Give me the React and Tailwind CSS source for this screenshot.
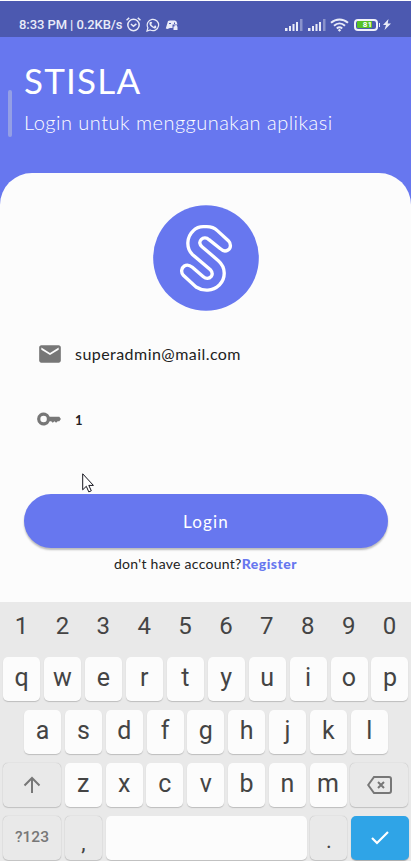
import React from 'react';

const LETTER = 'flex h-11 w-[37px] shrink-0 items-center justify-center rounded-[5px] bg-[#fcfcfc] pb-1 text-[25px] leading-none text-[#444] shadow-[0_1px_1px_#bdbdbd]';
const MUTED = 'flex h-11 shrink-0 items-center justify-center rounded-[5px] bg-[#e9e9e9] shadow-[0_0_1px_#aaa,0_1px_1px_#c4c4c4]';

function Letters({ keys }) {
  return keys.split('').map((k) => <div key={k} className={LETTER}>{k}</div>);
}

function Signal() {
  return (
    <svg className="h-3 w-[19px]" viewBox="0 0 19 12" fill="#e9ebf8">
      <path d="M1 9h2.5v3H1zM5 7h2v5H5zM8.500 5h2v7h-2zM12 3h2v9h-2z" />
      <path d="M16 0h2.500v12H16z" opacity=".4" />
    </svg>
  );
}

function StatusBar() {
  return (
    <div className="flex h-[37px] items-center border-t border-white bg-[#4c59b0] pt-[11px] text-[#e9ebf8]">
      <span className="ml-[19px] w-[107px] whitespace-nowrap font-['Roboto'] text-[13px] font-medium leading-none tracking-[-0.08px]">8:33 PM | 0.2KB/s</span>
      <svg className="h-[15px] w-[15px]" viewBox="0 0 14 14" fill="none" stroke="currentColor" strokeWidth="1.4">
        <circle cx="7" cy="7.500" r="5.300" />
        <path d="M.5 3 3 .8M11 .8 13.500 3M4.600 6.500 7 8.600l2.700-2.100" />
      </svg>
      <svg className="ml-[5px] h-[14px] w-[14px]" viewBox="0 0 14 14" fill="none" stroke="currentColor" strokeWidth="1.200">
        <path d="M1 13l.9-3.300A5.700 5.700 0 1 1 4.200 12Z" />
        <path d="M4.700 4.200c-1 1.200 0 3 1.500 4.300 1.400 1.200 2.900 1.600 3.700.5M4.700 4.200l1 1.300M9.900 9 8.500 8" strokeWidth="1.600" />
      </svg>
      <svg className="ml-[5px] h-3 w-[14px]" viewBox="0 0 14 12" fill="currentColor">
        <path d="M3 2 5 1.500h5l1.500 1 1 3H7.500V9H5L2.500 10 .8 9.600Z" />
        <path d="M8.500 7.500h4V11h-4zM9.500 8V6.300h2.500V8" />
        <path d="M4 4.500h2M9.500 3.500v1.500" stroke="#4c59b0" />
      </svg>
      <div className="ml-[105px] flex items-center">
        <Signal />
        <div className="w-[4px]" />
        <Signal />
        <svg className="ml-[4px] h-[14px] w-[19px]" viewBox="0 0 19 14" fill="none" stroke="currentColor" strokeWidth="2">
          <path d="M1 4.800c5-4.500 12-4.500 17 0M4 7.800c3.300-3 7.700-3 11 0M6.800 10.500c1.600-1.400 3.800-1.400 5.400 0" />
          <path d="m9.500 10.700 1.700 1.500-1.700 1.600-1.700-1.600Z" fill="currentColor" stroke="none" />
        </svg>
        <div className="ml-[5px] flex h-3 w-6 items-center rounded-[4px] border-2 border-[#f1f2fa] p-[1px]">
          <div className="flex h-[7px] w-[15px] items-center justify-end rounded-[1px] bg-[#55c126]"><span className="font-['Roboto'] text-[8px] font-bold leading-none text-white">81</span></div>
        </div>
        <div className="ml-[1px] h-[4px] w-[1px] bg-[#e9ebf8]" />
        <svg className="ml-[3px] h-[11px] w-2" viewBox="0 0 8 11" fill="currentColor"><path d="M5.500 0 0 6h3L1.500 11 8 4.600H4.700Z" /></svg>
      </div>
    </div>
  );
}

function Keyboard() {
  return (
    <div className="flex h-[259px] flex-col overflow-hidden bg-[#e9e9e9] pl-[3px] font-['Roboto']">
      <div className="flex h-[55px] gap-[3.900px] pt-[12px]">
        {'1234567890'.split('').map((n) => <span key={n} className="w-[37px] text-center text-[24px] leading-[25px] text-[#444]">{n}</span>)}
      </div>
      <div className="flex flex-col gap-[9px]">
        <div className="flex gap-[3.950px]"><Letters keys="qwertyuiop" /></div>
        <div className="flex gap-[3.850px] pl-[21px]"><Letters keys="asdfghjkl" /></div>
        <div className="flex gap-[3.800px]">
          <div className={`${MUTED} w-[58px] text-[#777]`}>
            <svg className="h-[18px] w-[18px]" viewBox="0 0 18 18" fill="none" stroke="currentColor" strokeWidth="2"><path d="M9 17V2M1.500 9.500 9 2l7.500 7.500" /></svg>
          </div>
          <Letters keys="zxcvbnm" />
          <div className={`${MUTED} w-[58px] text-[#777]`}>
            <svg className="h-[18px] w-[25px]" viewBox="0 0 25 18" fill="none" stroke="currentColor" strokeWidth="2"><path d="M7 1h15q2 0 2 2v12q0 2-2 2H7L1.200 9ZM11 6l6 6M17 6l-6 6" /></svg>
          </div>
        </div>
        <div className="flex gap-[3.800px]">
          <div className={`${MUTED} w-[58px] text-[15.500px] font-medium text-[#777]`}>?123</div>
          <div className={`${MUTED} w-[37px] pt-[8px] text-[22px] text-[#444]`}>,</div>
          <div className="h-11 w-[201px] rounded-[5px] bg-[#fcfcfc] shadow-[0_1px_1px_#bdbdbd]" />
          <div className={`${MUTED} w-[37px] pt-[4px] text-[22px] text-[#444]`}>.</div>
          <div className="flex h-11 w-[58px] items-center justify-center rounded-[5px] bg-[#2fa4e7] shadow-[0_1px_1px_#aaa]">
            <svg className="h-[14px] w-[18px]" viewBox="0 0 18 14" fill="none" stroke="white" strokeWidth="2.200"><path d="m1 7 5 5L17 1" /></svg>
          </div>
        </div>
      </div>
    </div>
  );
}

export default function App() {
  return (
    <div className="relative flex h-[861px] w-[411px] flex-col overflow-hidden bg-[#6777ef] font-['Lato',sans-serif]">
      <StatusBar />
      <header className="h-[136px] pl-6 text-white">
        <h1 className="h-[68px] whitespace-nowrap pt-[22px] text-[35px] leading-[42px] tracking-[1.200px]">STISLA</h1>
        <p className="whitespace-nowrap pt-[5px] text-[20px] font-light leading-6 tracking-[0.490px]">Login untuk menggunakan aplikasi</p>
      </header>
      <div className="absolute left-[8px] top-[90px] h-[47px] w-[4px] rounded-full bg-[#949fe5]" />
      <main className="flex h-[429px] flex-col rounded-t-[32px] bg-[#fcfcfc] px-6 pt-[32px] text-[#222]">
        <svg className="h-[106px] w-[106px] self-center" viewBox="39 30 318 318">
          <circle cx="198" cy="189" r="158.500" fill="#6777ef" />
          <path d="M190 95h10c15 0 24 4 32 12l33 30c9 9 8 23-1 28-8 5-16 3-23-4l-34-27c-7-6-17-7-23-1-7 7-6 15 2 22l49 42c23 20 23 53 3 73-20 19-48 20-70 6l-38-35c-8-9-6-22 3-28 8-5 17-2 24 4l33 28c8 7 17 7 24-1 5-7 3-13-3-20l-53-45c-21-19-18-54 2-72 8-8 19-12 30-12Z" fill="none" stroke="white" strokeWidth="10" />
        </svg>
        <div className="mt-[31px] flex h-6 items-center pl-[13px]">
          <svg className="h-[26px] w-[26px]" viewBox="0 0 24 24" fill="#777"><path d="M20 4H4c-1.100 0-2 .9-2 2v12c0 1.100.9 2 2 2h16c1.100 0 2-.9 2-2V6c0-1.100-.9-2-2-2Zm0 4-8 5-8-5V6l8 5 8-5Z" /></svg>
          <span className="ml-[12px] whitespace-nowrap text-[16px] leading-6 tracking-[0.450px]">superadmin@mail.com</span>
        </div>
        <div className="mt-[41px] flex h-6 items-center pl-[12px]">
          <svg className="h-[26px] w-[26px]" viewBox="0 0 24 24" fill="#777"><path d="M12.650 10A6 6 0 1 0 12.650 14H14l1.500 1.500L17 14l1.500 1.500L20 14h1.500l1.500-2-1.500-2ZM7 15a3 3 0 1 1 0-6 3 3 0 0 1 0 6Z" /></svg>
          <span className="ml-[13px] pt-px text-[13px] font-bold leading-6">1</span>
        </div>
        <button className="mt-[63px] h-[54px] w-[364px] shrink-0 rounded-full bg-[#6777ef] text-[17px] tracking-[1.200px] text-white shadow-[0_2px_2px_#bbb]"><span className="relative top-px">Login</span></button>
        <p className="mt-[6px] whitespace-nowrap text-center text-[14px] leading-5 tracking-[0.280px]">don't have account?<span className="font-black tracking-[0.500px] text-[#6777ef]">Register</span></p>
      </main>
      <Keyboard />
      <svg className="absolute left-[82px] top-[473px] h-5 w-3" viewBox="0 0 12 20"><path d="M.7.8v16l3.600-3.500 2.500 5.600 2.500-1.100-2.500-5.400h4.600Z" fill="white" stroke="#15151e" /></svg>
    </div>
  );
}
